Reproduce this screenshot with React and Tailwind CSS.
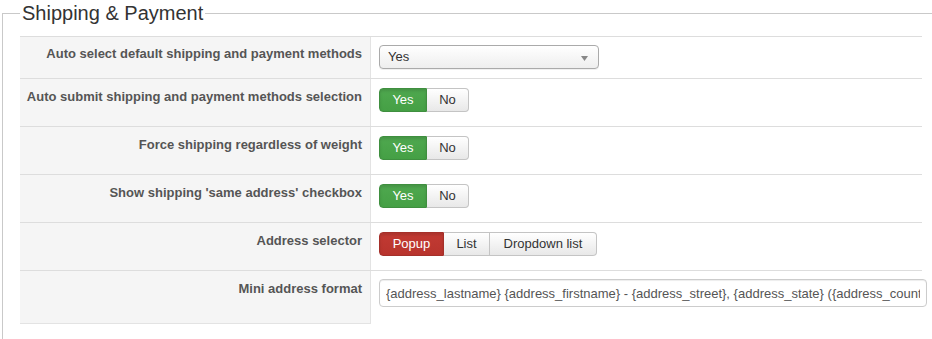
import React from "react";

function Row({ label, h, labelPt, ctrlPt, last, children }) {
  return (
    <div className={`flex border-t border-[#dddddd] ${h}`}>
      <div
        className={`w-[351px] shrink-0 bg-[#f5f5f5] border-r border-[#e3e3e3] pr-[8px] text-right text-[13px] leading-[18px] font-bold text-[#555555] ${labelPt} ${last ? "border-b" : ""}`}
      >
        {label}
      </div>
      <div className={`flex-1 pl-[8px] ${ctrlPt}`}>{children}</div>
    </div>
  );
}

function YesNo() {
  return (
    <div className="flex h-[24px] text-[13px]">
      <div className="w-[48px] h-[24px] flex items-center justify-center rounded-l-[4px] border border-[#3f8f3f] bg-linear-to-b from-[#4fa84f] to-[#45a045] text-white shadow-[inset_0_2px_3px_rgba(0,0,0,0.12)]">
        Yes
      </div>
      <div className="w-[42px] h-[24px] flex items-center justify-center rounded-r-[4px] border border-l-0 border-[#c4c4c4] bg-linear-to-b from-white to-[#e8e8e8] text-[#333333]">
        No
      </div>
    </div>
  );
}

export default function App() {
  return (
    <div className="w-[932px] h-[339px] overflow-hidden bg-white font-['Liberation_Sans',Arial,Helvetica,sans-serif]">
      <fieldset className="ml-[2px] w-[930px] h-[339px] border-t border-l border-[#c9c9c9] pl-[17px]">
        <legend className="px-[2px] text-[20px] leading-[26px] text-[#333333]">
          Shipping &amp; Payment
        </legend>
        <div className="mt-[10px] w-[902px]">
          <Row
            label="Auto select default shipping and payment methods"
            h="h-[42px]"
            labelPt="pt-[8px]"
            ctrlPt="pt-[8px]"
          >
            <div className="relative flex items-center w-[220px] h-[24px] rounded-[4px] border border-[#aaaaaa] bg-linear-to-b from-white to-[#eeeeee] pl-[8px] text-[13px] text-[#333333] shadow-[0_1px_0_rgba(0,0,0,0.06)]">
              Yes
              <svg
                className="absolute right-[10px] top-[10px]"
                width="7"
                height="5"
                viewBox="0 0 7 5"
              >
                <path d="M0 0 L7 0 L3.5 5 Z" fill="#888888" />
              </svg>
            </div>
          </Row>
          <Row
            label="Auto submit shipping and payment methods selection"
            h="h-[48px]"
            labelPt="pt-[9px]"
            ctrlPt="pt-[9px]"
          >
            <YesNo />
          </Row>
          <Row
            label="Force shipping regardless of weight"
            h="h-[48px]"
            labelPt="pt-[9px]"
            ctrlPt="pt-[9px]"
          >
            <YesNo />
          </Row>
          <Row
            label="Show shipping 'same address' checkbox"
            h="h-[48px]"
            labelPt="pt-[9px]"
            ctrlPt="pt-[9px]"
          >
            <YesNo />
          </Row>
          <Row
            label="Address selector"
            h="h-[48px]"
            labelPt="pt-[9px]"
            ctrlPt="pt-[9px]"
          >
            <div className="flex h-[24px] text-[13px]">
              <div className="w-[65px] h-[24px] flex items-center justify-center rounded-l-[4px] border border-[#a5302a] bg-linear-to-b from-[#c23a33] to-[#b8342d] text-white shadow-[inset_0_2px_3px_rgba(0,0,0,0.12)]">
                Popup
              </div>
              <div className="w-[46px] h-[24px] flex items-center justify-center border border-l-0 border-[#c4c4c4] bg-linear-to-b from-white to-[#e8e8e8] text-[#333333]">
                List
              </div>
              <div className="w-[107px] h-[24px] flex items-center justify-center rounded-r-[4px] border border-l-0 border-[#c4c4c4] bg-linear-to-b from-white to-[#e8e8e8] text-[#333333]">
                Dropdown list
              </div>
            </div>
          </Row>
          <Row
            label="Mini address format"
            h="h-[54px]"
            labelPt="pt-[9px]"
            ctrlPt="pt-[8px]"
            last
          >
            <input
              readOnly
              value="{address_lastname} {address_firstname} - {address_street}, {address_state} ({address_country})"
              className="block w-[548px] h-[28px] rounded-[4px] border border-[#cccccc] px-[6px] text-[13px] text-[#555555] bg-white shadow-[inset_0_1px_1px_rgba(0,0,0,0.075)] outline-none"
            />
          </Row>
        </div>
      </fieldset>
    </div>
  );
}
